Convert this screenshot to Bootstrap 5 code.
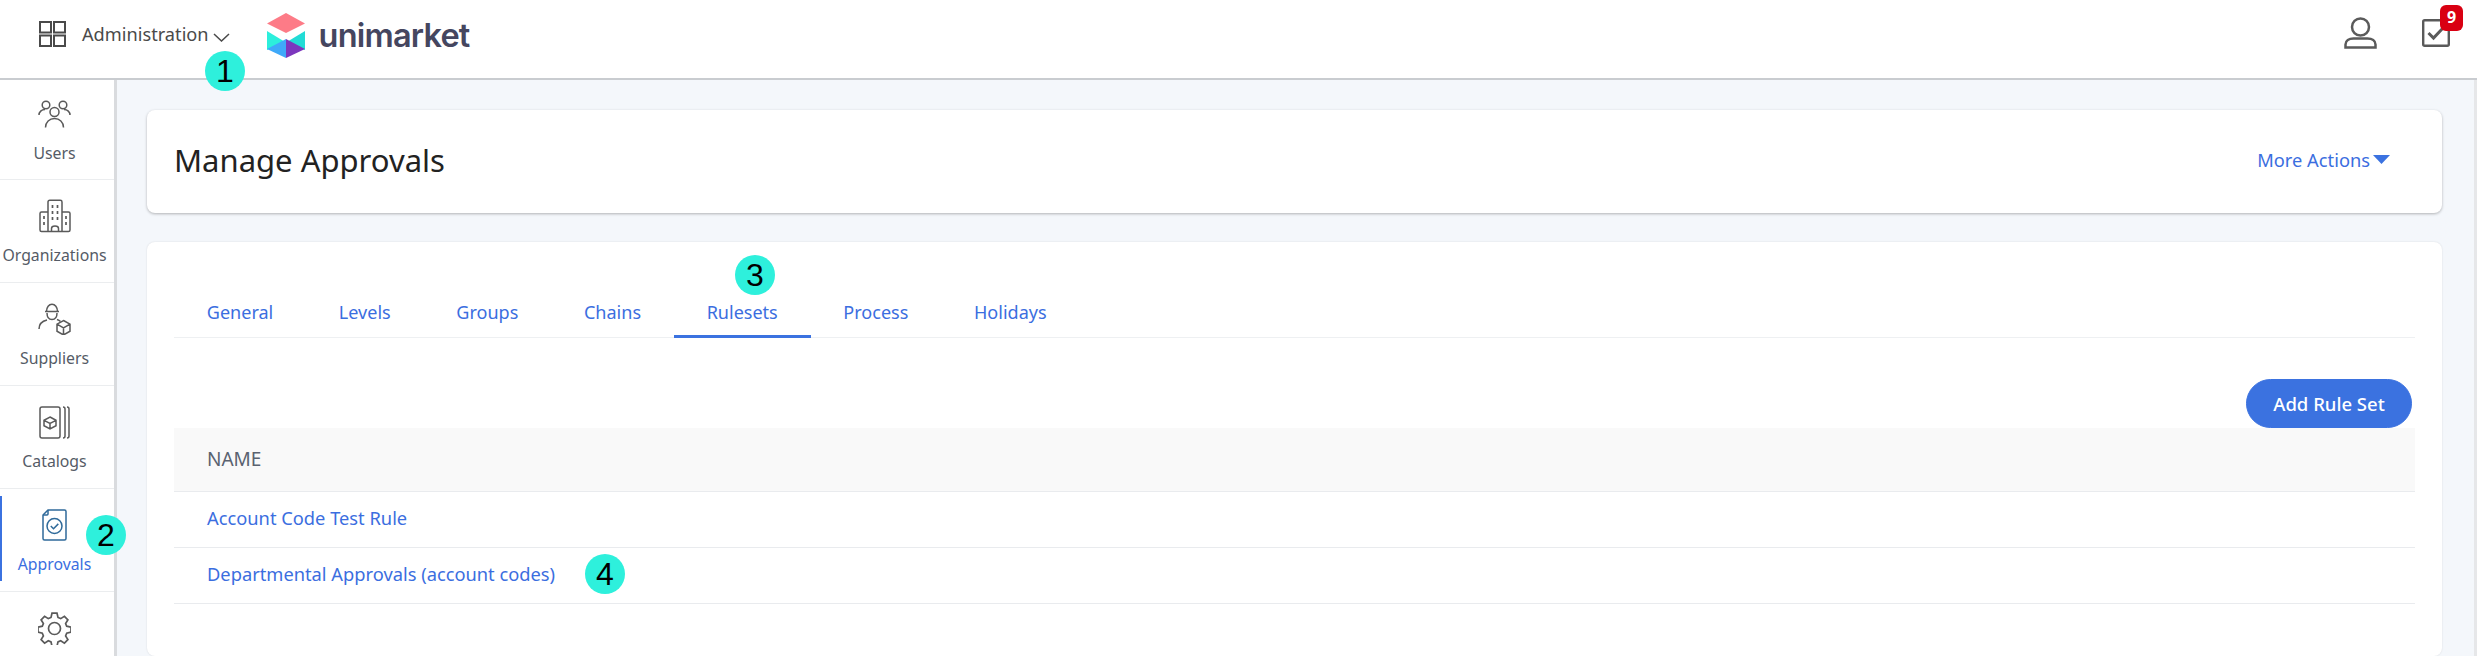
<!DOCTYPE html>
<html lang="en"><head><meta charset="utf-8"><title>Manage Approvals</title>
<link href="https://cdn.jsdelivr.net/npm/bootstrap@5.3.0/dist/css/bootstrap.min.css" rel="stylesheet">
<style>
html,body{height:656px;overflow:hidden}
body{width:2477px;font-family:"Noto Sans","Open Sans",sans-serif;font-size:18.300px;color:#4a4a4a;background:#fff;position:relative}
a{text-decoration:none;color:#3b6ee0}
svg{display:block}
.topbar{height:80px;padding:0;border-bottom:2px solid #c9ccd0;background:#fff;flex-wrap:nowrap;justify-content:flex-start;align-items:flex-start}
.grid-ico{margin:21px 16px 0 39px}
.admin-txt{margin-top:20px;font-size:18.200px;line-height:28px;color:#4a4a4a}
.chev{margin:33px 0 0 4px}
.brand-ico{margin:13px 14px 0 37px}
.brand-txt{margin-top:14px;font-family:"Inter",sans-serif;font-weight:600;font-size:32.500px;line-height:44px;letter-spacing:-.8px;color:#45465f}
.top-right{margin-left:auto;display:flex;align-items:flex-start}
.user-ico{margin:17px 45px 0 0}
.task-wrap{position:relative;margin:19px 27px 0 0}
.task-badge{position:absolute;left:18px;top:-14px;width:23px;height:26px;padding:0;border-radius:6px;background:#d90012;color:#fff;font-size:16px;font-weight:700;line-height:24px;text-align:center}
.shell{height:576px}
.sidebar{width:117px;flex:none;border-right:3px solid #d9dbde;background:#fff}
.side-item{height:103px;border-bottom:1px solid #ebedef;display:flex;flex-direction:column;align-items:center;color:#555b66;font-size:15.800px;padding:19px 5px 0 0;position:relative}
.side-item:first-child{height:100px;padding-top:17px}
.side-item .side-ico{height:34px;display:flex;align-items:center}
.side-lbl{margin-top:11px;line-height:22px;white-space:nowrap}
.side-item:first-child .side-lbl{margin-top:11px}
.side-item.now{color:#3b6ee0}
.side-item.now::before{content:"";position:absolute;left:0;top:7px;height:85px;width:2px;background:#3b72e0}
.main-area{background:#f4f7fb;padding:30px 32px 0 30px;border-right:3px solid #e6e7e9}
.head-card{height:103px;border:0;border-radius:8px;box-shadow:0 1px 3px rgba(0,0,0,.28);margin-bottom:29px;flex-direction:row;align-items:center;justify-content:space-between;padding:0 52px 2px 27px}
.page-ttl{font-size:31px;font-weight:400;color:#222;margin:0}
.more{font-size:18.300px;display:flex;align-items:center;gap:3px;margin-bottom:2px}
.body-card{height:414px;border:0;border-radius:8px;box-shadow:0 0 2px rgba(0,0,0,.12);padding:26px 27px 0 27px}
.tabbar{border-bottom:1px solid #eef0f2;height:70px;align-items:flex-end;flex-wrap:nowrap}
.tab-lnk{display:block;padding:0 32.800px 11px;line-height:24px;font-size:18.050px;margin-bottom:-1px;border-bottom:3px solid transparent}
.tab-lnk.on{border-bottom-color:#3b72e0}
.add-row{height:90px;display:flex;justify-content:flex-end;align-items:flex-end;padding-right:3px}
.add-btn{width:166px;height:49px;padding:0;background:#3b72e0;border-color:#3b72e0;font-size:18.500px;font-weight:500;border-radius:25px}
.rule-tbl{margin:0;font-size:18.300px}
.rule-tbl th{background:#f9f9f9;color:#5a6270;font-weight:400;font-size:19px;height:63px;padding:0 33px;vertical-align:middle;border-bottom:1px solid #e9ebee}
.rule-tbl td{height:56px;padding:0 33px 2px;vertical-align:middle;border-bottom:1px solid #e9ebee}
.mark-dot{position:absolute;width:40px;height:40px;border-radius:50%;background:#2ef0dc;color:#000;font-family:"Liberation Sans",sans-serif;font-size:32px;line-height:40px;text-align:center}
</style></head>
<body>
<nav class="navbar topbar">
 <svg class="grid-ico" width="27" height="26" viewBox="0 0 27 26" fill="none" stroke="#4a4a4a" stroke-width="2"><rect x="1" y="1" width="11" height="10.500"/><rect x="15" y="1" width="11" height="10.500"/><rect x="1" y="14.500" width="11" height="10.500"/><rect x="15" y="14.500" width="11" height="10.500"/></svg>
 <span class="admin-txt">Administration</span>
 <svg class="chev" width="17" height="9" viewBox="0 0 17 9" fill="none" stroke="#4a4a4a" stroke-width="1.500"><path d="M1 1l7.500 7L16 1"/></svg>
 <svg class="brand-ico" width="38" height="45" viewBox="0 0 38 45"><path d="M0 10.500L19 0l19 10.500L19 20z" fill="#fd7b87"/><path d="M0 18l19 11.500L0 37z" fill="#2cefdc"/><path d="M38 18L19 29.500 38 37z" fill="#22dcd6"/><path d="M0 36l19-10v19z" fill="#3fa9f9"/><path d="M38 36L19 26v19z" fill="#7c37bd"/></svg>
 <span class="brand-txt">unimarket</span>
 <div class="top-right">
  <svg class="user-ico" width="33" height="32" viewBox="0 0 33 32" fill="none" stroke="#5a5a5a" stroke-width="2.500"><circle cx="16.500" cy="10" r="8.500"/><path d="M1.500 30.500v-3c0-4 3.500-6 8-6h14c4.500 0 8 2 8 6v3z"/></svg>
  <div class="task-wrap"><svg width="28" height="28" viewBox="0 0 28 28" fill="none" stroke="#5a5a5a"><rect x="1.200" y="1.200" width="25.600" height="25.600" rx="1.500" stroke-width="2.400"/><path d="M6.500 14l5 5L21 9" stroke-width="3"/></svg><span class="badge task-badge">9</span></div>
 </div>
</nav>
<div class="d-flex shell overflow-hidden">
 <aside class="sidebar">
  <div class="side-item"><span class="side-ico"><svg width="33" height="28" viewBox="0 0 33 28" fill="none" stroke="#5a5a5a" stroke-width="1.500"><circle cx="8" cy="5" r="3.800"/><circle cx="25" cy="5" r="3.800"/><circle cx="16.500" cy="12" r="4.500"/><path d="M1 15c0-3 2.500-5.500 6-5.500M32 15c0-3-2.500-5.500-6-5.500M7.500 27.500c0-5.500 4-9 9-9s9 3.500 9 9"/></svg></span><span class="side-lbl">Users</span></div>
  <div class="side-item"><span class="side-ico"><svg width="32" height="34" viewBox="0 0 32 34" fill="none" stroke="#5a5a5a" stroke-width="1.500"><path d="M9 32V3c0-1 .7-1.700 1.700-1.700h10.600c1 0 1.700.7 1.700 1.700v29M9 13H2.500c-.8 0-1.500.7-1.500 1.500V31c0 .8.7 1.500 1.500 1.500h27c.8 0 1.500-.7 1.500-1.500V14.500c0-.8-.7-1.500-1.500-1.500H23M12.500 32.500v-3c0-1.500 1.500-2.500 3.500-2.500s3.500 1 3.500 2.500v3"/><path d="M13.500 6v3M18.500 6v3M13.500 12v3M18.500 12v3M13.500 18v3M18.500 18v3M5 17v3M5 23v3M27 17v3M27 23v3" stroke-width="1.700"/></svg></span><span class="side-lbl">Organizations</span></div>
  <div class="side-item"><span class="side-ico"><svg width="33" height="32" viewBox="0 0 33 32" fill="none" stroke="#5a5a5a" stroke-width="1.500"><path d="M7 8.500h14M8.500 8.500C8.500 4 11 1.200 14 1.200s5.500 2.800 5.500 7.300M9 10c0 4 2 6.500 5 6.500s5-2.500 5-6.500M1 26c0-5 3.500-8 8-9M19 16.500c1.500.5 2.500 1 3.500 2"/><path d="M25.500 17.500l6.500 3.700v7L25.500 32 19 28.200v-7zM19 21.200l6.500 3.700 6.500-3.700M25.500 25v7"/></svg></span><span class="side-lbl">Suppliers</span></div>
  <div class="side-item"><span class="side-ico"><svg width="31" height="33" viewBox="0 0 31 33" fill="none" stroke="#5a5a5a" stroke-width="1.500"><rect x="1" y="1" width="20" height="31" rx="2"/><path d="M24 1c1.500 0 2 1 2 2v27c0 1-.5 2-2 2M28 1c1.500 0 2 1 2 2v27c0 1-.5 2-2 2"/><path d="M11 11l6 3.300v5.400L11 23l-6-3.300v-5.400zM5 14.300l6 3.200 6-3.200M11 17.500V23"/></svg></span><span class="side-lbl">Catalogs</span></div>
  <div class="side-item now"><span class="side-ico"><svg width="25" height="32" viewBox="0 0 25 32" fill="none" stroke="#2f6a9a" stroke-width="1.500"><path d="M6 1h16.500c.8 0 1.500.7 1.500 1.500v27c0 .8-.7 1.500-1.500 1.500h-20C1.700 31 1 30.300 1 29.500V6z"/><path d="M6 1v4c0 .6-.4 1-1 1H1"/><circle cx="12.500" cy="17" r="7.500"/><path d="M8.800 17l2.700 2.700 4.800-4.800"/></svg></span><span class="side-lbl">Approvals</span></div>
  <div class="side-item"><span class="side-ico"><svg width="33" height="33" viewBox="0 0 33 33" fill="none" stroke="#5a5a5a" stroke-width="1.700"><circle cx="16.500" cy="16.500" r="6"/><path d="M14 1.200h5l1 4.300 2.700 1.100 3.700-2.300 3.500 3.500-2.300 3.700 1.100 2.700 4.300 1v5l-4.300 1-1.100 2.700 2.300 3.700-3.500 3.500-3.700-2.300-2.700 1.100-1 4.300h-5l-1-4.300-2.700-1.100-3.700 2.300-3.500-3.500 2.300-3.700-1.100-2.700-4.300-1v-5l4.300-1 1.100-2.700-2.300-3.700 3.500-3.500 3.700 2.300L13 5.500z"/></svg></span></div>
 </aside>
 <main class="main-area flex-grow-1">
  <div class="card head-card"><h1 class="page-ttl">Manage Approvals</h1><a class="more" href="#">More Actions<svg width="17" height="9" viewBox="0 0 17 9"><path d="M0 0h17l-8.500 9z" fill="#3b72e0"/></svg></a></div>
  <div class="card body-card">
   <ul class="nav tabbar">
    <li class="nav-item"><a class="tab-lnk" href="#">General</a></li>
    <li class="nav-item"><a class="tab-lnk" href="#">Levels</a></li>
    <li class="nav-item"><a class="tab-lnk" href="#">Groups</a></li>
    <li class="nav-item"><a class="tab-lnk" href="#">Chains</a></li>
    <li class="nav-item"><a class="tab-lnk on" href="#">Rulesets</a></li>
    <li class="nav-item"><a class="tab-lnk" href="#">Process</a></li>
    <li class="nav-item"><a class="tab-lnk" href="#">Holidays</a></li>
   </ul>
   <div class="add-row"><button class="btn btn-primary add-btn">Add Rule Set</button></div>
   <table class="table rule-tbl"><thead><tr><th>NAME</th></tr></thead><tbody>
    <tr><td><a href="#">Account Code Test Rule</a></td></tr>
    <tr><td><a href="#">Departmental Approvals (account codes)</a></td></tr>
   </tbody></table>
  </div>
 </main>
</div>
<span class="mark-dot" style="left:205px;top:51px">1</span>
<span class="mark-dot" style="left:86px;top:515px">2</span>
<span class="mark-dot" style="left:735px;top:255px">3</span>
<span class="mark-dot" style="left:585px;top:554px">4</span>
<script src="https://cdn.jsdelivr.net/npm/bootstrap@5.3.0/dist/js/bootstrap.bundle.min.js"></script>
</body></html>
